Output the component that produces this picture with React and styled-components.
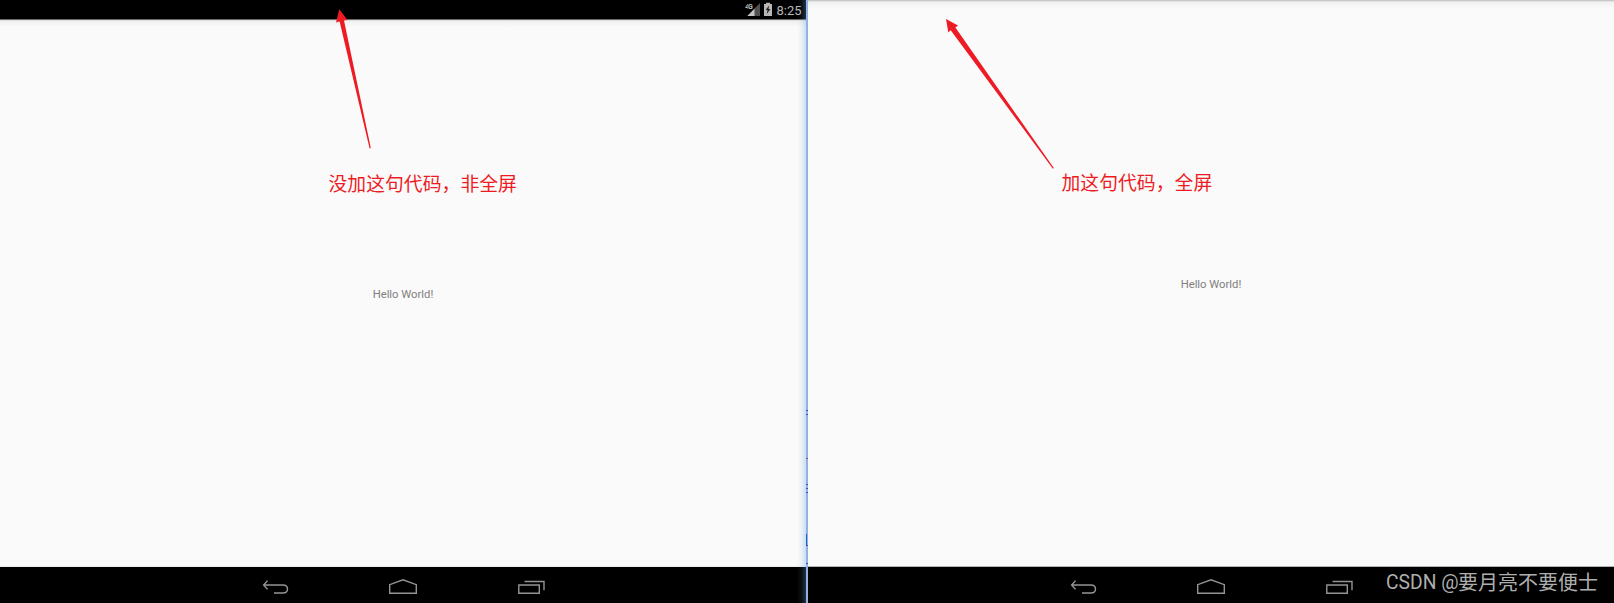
import React from "react";
import styled, { createGlobalStyle } from "styled-components";

const GlobalStyle = createGlobalStyle`
  body { margin: 0; background: #fafafa; overflow: hidden; }
`;

const Comparison = styled.main`
  position: relative;
  display: flex;
  width: 1614px;
  height: 603px;
  overflow: hidden;
  font-family: Roboto, "Noto Sans CJK SC", sans-serif;
`;

const Device = styled.section`
  width: 806px;
  display: flex;
  flex-direction: column;
`;

const StatusBar = styled.header`
  box-sizing: border-box;
  height: 19px;
  background: #000;
  color: #b8b8b8;
  display: flex;
  align-items: center;
  justify-content: flex-end;
  gap: 3px;
  padding-right: 4.5px;
  font-size: 13px;
  line-height: 19px;
`;

const StatusIcons = styled.svg`
  display: block;
`;

const Clock = styled.time`
  padding-top: 2px;
`;

const Screen = styled.div`
  flex: 1;
  display: flex;
  align-items: center;
  justify-content: center;
  box-sizing: border-box;
  padding-top: ${(p) => (p.$fullscreen ? 3 : 4)}px;
  color: #808080;
  font-size: 11.25px;
  line-height: 14px;
  background: ${(p) =>
    p.$fullscreen
      ? "linear-gradient(#c8c8c8 0 1px, #e5e5e5 1px 2px, #f0f0f0 2px, #fafafa 8px)"
      : "linear-gradient(#6f6a6a 0 1px, #dedede 1px 2px, #f0f0f0 2px, #fafafa 8px)"};
  border-bottom: 1px solid ${(p) => (p.$fullscreen ? "#b2b6b6" : "#e9eeee")};
`;

const NavBar = styled.nav`
  box-sizing: border-box;
  height: 36px;
  padding-top: 5px;
  background: #000;
  display: flex;
  justify-content: center;
  align-items: center;
  gap: 98px;
`;

const NavIcon = styled.svg`
  display: block;
  width: 30px;
  height: 20px;
  fill: none;
  stroke: #949494;
  stroke-width: 1.4;
`;

const Divider = styled.div`
  display: flex;
  justify-content: flex-end;
  width: 2px;
  background: #92b3df;
`;

const Edge = styled.svg`
  flex: none;
  display: block;
  width: 11px;
  height: 603px;
`;

const Arrow = styled.svg`
  position: absolute;
  inset: 0;
  width: 1614px;
  height: 210px;
  fill: #ed1c24;
  pointer-events: none;
`;

const Note = styled.p`
  position: absolute;
  left: ${(p) => p.$x}px;
  top: ${(p) => p.$y}px;
  margin: 0;
  color: #ed1c24;
  font-family: "Noto Sans CJK SC", sans-serif;
  font-size: 18.8px;
  letter-spacing: 0.06px;
  line-height: 28px;
  white-space: nowrap;
`;

const Watermark = styled.div`
  position: absolute;
  right: 16px;
  bottom: 6px;
  display: flex;
  align-items: flex-start;
  color: #aeaeae;
  font-family: "Noto Sans CJK SC", sans-serif;
  font-size: 20px;
  line-height: 28px;
  white-space: nowrap;
`;

const Brand = styled.span`
  width: 72px;
  padding-top: 1px;
  font-family: Roboto, sans-serif;
  font-size: 19.3px;
`;

function Navigation() {
  return (
    <NavBar>
      <NavIcon viewBox="0 0 30 20">
        <path d="M7.6 2.6L3.6 7l4 4.4M3.6 7h19.2q4.7 0 4.7 4t-4.7 4H14" />
      </NavIcon>
      <NavIcon viewBox="0 0 30 20">
        <path d="M1.7 15.2V6.7L15 1.8l13.3 4.9v8.5z" />
      </NavIcon>
      <NavIcon viewBox="0 0 30 20">
        <path d="M2.8 7h20.5v8.2H2.8zM8.5 3.5H28v8.7" />
      </NavIcon>
    </NavBar>
  );
}

function StatusSymbols() {
  return (
    <StatusIcons width="28" height="19" viewBox="0 0 28 19">
      <path d="M15 3v13H2z" fill="#505050" />
      <path d="M9.5 8.8V16H2.5z" fill="#c4c4c4" />
      <text x="0.3" y="9" fontSize="7" fontWeight="700" textLength="7.5" fill="#c4c4c4" stroke="#000" strokeWidth="1.5" paintOrder="stroke">4G</text>
      <path d="M19 4h2V2.8h4V4h2v12h-8z" fill="#b8b8b8" />
      <path d="M24.2 5.5L20.6 10h1.9l-.8 4 3.8-5h-2z" fill="#222" />
    </StatusIcons>
  );
}

function WindowEdge() {
  return (
    <Edge viewBox="0 0 11 603" shapeRendering="crispEdges">
      <defs>
        <linearGradient id="glow">
          <stop offset="0" stopColor="#64a0e1" stopOpacity="0" />
          <stop offset="0.5" stopColor="#64a0e1" stopOpacity="0.1" />
          <stop offset="1" stopColor="#64a0e1" stopOpacity="0.32" />
        </linearGradient>
      </defs>
      <rect width="9" height="603" fill="url(#glow)" />
      <path d="M9 410h2v1H9zM9 414h2v1H9zM9 484h2v1H9zM9 488h2v1H9zM9 492h2v1H9zM9 545h2v1H9zM9 563h2v1H9z" fill="#2f58b4" />
      <rect x="9" y="458" width="2" height="1" fill="#805b72" />
      <rect x="9" y="534" width="1" height="11" fill="#1761d5" />
    </Edge>
  );
}

export default function App() {
  return (
    <>
      <GlobalStyle />
      <Comparison>
        <Device>
          <StatusBar>
            <StatusSymbols />
            <Clock>8:25</Clock>
          </StatusBar>
          <Screen>Hello World!</Screen>
          <Navigation />
        </Device>
        <Divider>
          <WindowEdge />
        </Divider>
        <Device>
          <Screen $fullscreen>Hello World!</Screen>
          <Navigation />
        </Device>
        <Watermark>
          <Brand>CSDN @</Brand>
          <span>要月亮不要便士</span>
        </Watermark>
        <Arrow viewBox="0 0 1614 210">
          <path d="M339.3 9.3L347.3 19.8 344 20.4 370.8 148 369.6 148.5 339.6 21.4 336 22.5z" />
          <path d="M946 19L958 25.4 955.4 27.5 1053.8 168 1052.9 168.8 950.7 30.3 948.3 32.4z" />
        </Arrow>
        <Note $x={328.5} $y={169}>没加这句代码，非全屏</Note>
        <Note $x={1061.5} $y={168}>加这句代码，全屏</Note>
      </Comparison>
    </>
  );
}
